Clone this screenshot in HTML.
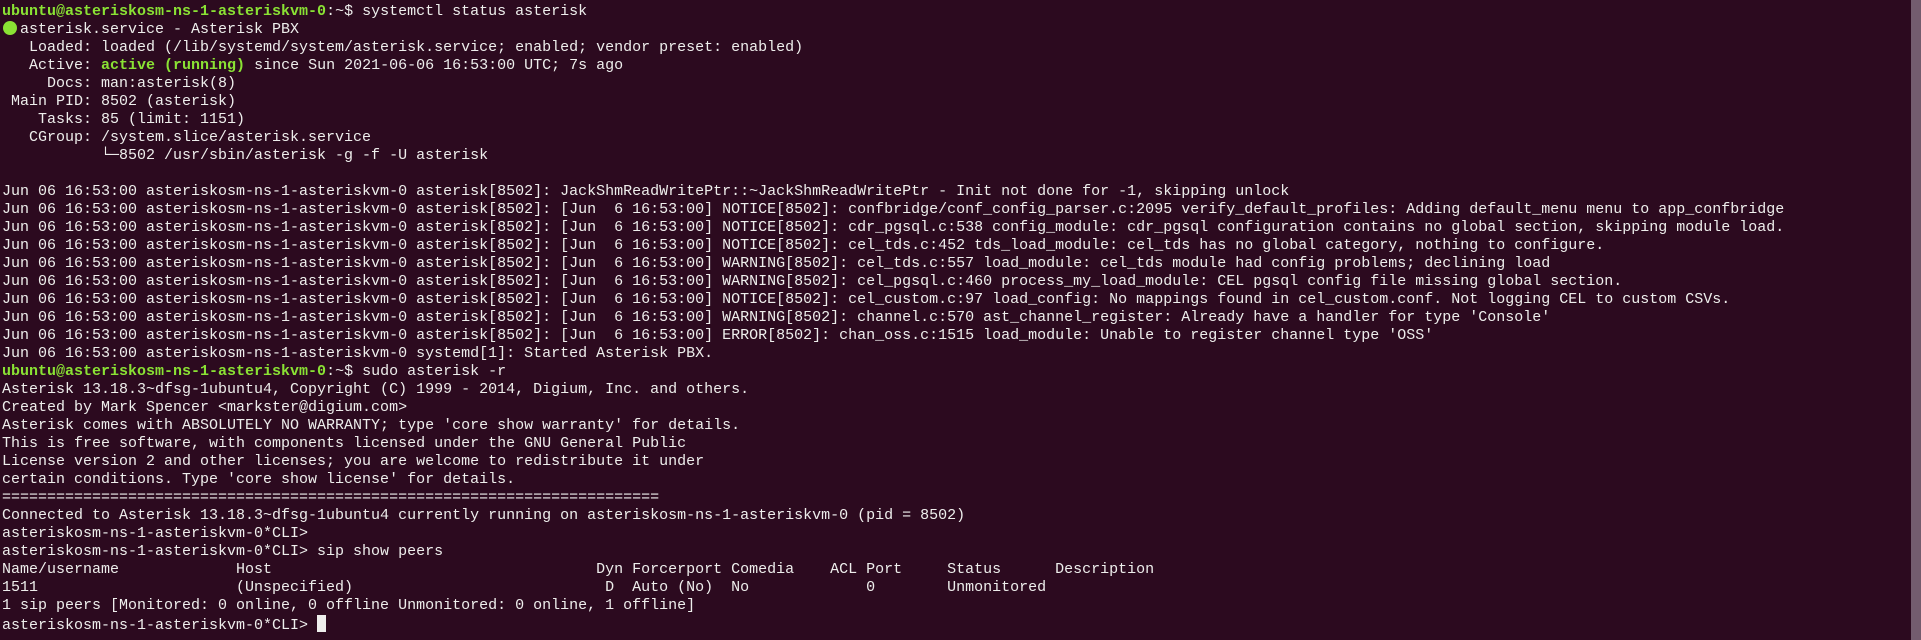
<!DOCTYPE html>
<html><head><meta charset="utf-8"><style>
html,body{margin:0;padding:0;background:#2c0a1f;width:1921px;height:640px;overflow:hidden}
pre{margin:0;position:absolute;left:2px;top:3px;font-family:"Liberation Mono","DejaVu Sans Mono",monospace;font-size:15px;line-height:18px;color:#eeeeec;white-space:pre}
.g{color:#8ae234;font-weight:bold}
.gn{color:#8ae234;font-weight:bold}
.dot{display:inline-block;width:18px;height:14px;position:relative;vertical-align:-2px}
.dot:before{content:"";position:absolute;left:1px;top:0;width:14px;height:14px;border-radius:50%;background:#8ae234}
.sb{position:absolute;left:1911px;top:0;width:10px;height:640px;background:#735c6e}
.cur{display:inline-block;width:9px;height:17px;background:#eeeeec;vertical-align:-3px}
</style></head><body>
<pre><span class="g">ubuntu@asteriskosm-ns-1-asteriskvm-0</span>:~$ systemctl status asterisk
<span class="dot"></span>asterisk.service - Asterisk PBX
   Loaded: loaded (/lib/systemd/system/asterisk.service; enabled; vendor preset: enabled)
   Active: <span class="gn">active (running)</span> since Sun 2021-06-06 16:53:00 UTC; 7s ago
     Docs: man:asterisk(8)
 Main PID: 8502 (asterisk)
    Tasks: 85 (limit: 1151)
   CGroup: /system.slice/asterisk.service
           └─8502 /usr/sbin/asterisk -g -f -U asterisk

Jun 06 16:53:00 asteriskosm-ns-1-asteriskvm-0 asterisk[8502]: JackShmReadWritePtr::~JackShmReadWritePtr - Init not done for -1, skipping unlock
Jun 06 16:53:00 asteriskosm-ns-1-asteriskvm-0 asterisk[8502]: [Jun  6 16:53:00] NOTICE[8502]: confbridge/conf_config_parser.c:2095 verify_default_profiles: Adding default_menu menu to app_confbridge
Jun 06 16:53:00 asteriskosm-ns-1-asteriskvm-0 asterisk[8502]: [Jun  6 16:53:00] NOTICE[8502]: cdr_pgsql.c:538 config_module: cdr_pgsql configuration contains no global section, skipping module load.
Jun 06 16:53:00 asteriskosm-ns-1-asteriskvm-0 asterisk[8502]: [Jun  6 16:53:00] NOTICE[8502]: cel_tds.c:452 tds_load_module: cel_tds has no global category, nothing to configure.
Jun 06 16:53:00 asteriskosm-ns-1-asteriskvm-0 asterisk[8502]: [Jun  6 16:53:00] WARNING[8502]: cel_tds.c:557 load_module: cel_tds module had config problems; declining load
Jun 06 16:53:00 asteriskosm-ns-1-asteriskvm-0 asterisk[8502]: [Jun  6 16:53:00] WARNING[8502]: cel_pgsql.c:460 process_my_load_module: CEL pgsql config file missing global section.
Jun 06 16:53:00 asteriskosm-ns-1-asteriskvm-0 asterisk[8502]: [Jun  6 16:53:00] NOTICE[8502]: cel_custom.c:97 load_config: No mappings found in cel_custom.conf. Not logging CEL to custom CSVs.
Jun 06 16:53:00 asteriskosm-ns-1-asteriskvm-0 asterisk[8502]: [Jun  6 16:53:00] WARNING[8502]: channel.c:570 ast_channel_register: Already have a handler for type 'Console'
Jun 06 16:53:00 asteriskosm-ns-1-asteriskvm-0 asterisk[8502]: [Jun  6 16:53:00] ERROR[8502]: chan_oss.c:1515 load_module: Unable to register channel type 'OSS'
Jun 06 16:53:00 asteriskosm-ns-1-asteriskvm-0 systemd[1]: Started Asterisk PBX.
<span class="g">ubuntu@asteriskosm-ns-1-asteriskvm-0</span>:~$ sudo asterisk -r
Asterisk 13.18.3~dfsg-1ubuntu4, Copyright (C) 1999 - 2014, Digium, Inc. and others.
Created by Mark Spencer &lt;markster@digium.com&gt;
Asterisk comes with ABSOLUTELY NO WARRANTY; type 'core show warranty' for details.
This is free software, with components licensed under the GNU General Public
License version 2 and other licenses; you are welcome to redistribute it under
certain conditions. Type 'core show license' for details.
=========================================================================
Connected to Asterisk 13.18.3~dfsg-1ubuntu4 currently running on asteriskosm-ns-1-asteriskvm-0 (pid = 8502)
asteriskosm-ns-1-asteriskvm-0*CLI&gt;
asteriskosm-ns-1-asteriskvm-0*CLI&gt; sip show peers
Name/username             Host                                    Dyn Forcerport Comedia    ACL Port     Status      Description
1511                      (Unspecified)                            D  Auto (No)  No             0        Unmonitored
1 sip peers [Monitored: 0 online, 0 offline Unmonitored: 0 online, 1 offline]
asteriskosm-ns-1-asteriskvm-0*CLI&gt; <span class="cur"></span></pre>
<div class="sb"></div>
</body></html>
